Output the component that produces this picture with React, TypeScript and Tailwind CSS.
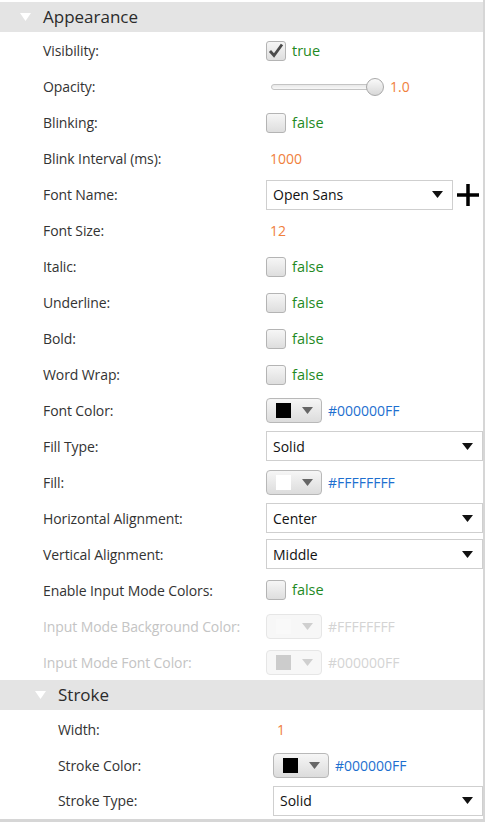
import React from 'react';

const font = { fontFamily: '"Open Sans", "Noto Sans", sans-serif' };

function Header({ title, indent }: { title: string; indent: 'top' | 'nested' }) {
  return (
    <div
      className={`flex h-[30px] items-center bg-[#e4e4e4] ${indent === 'top' ? 'pl-[20px]' : 'pl-[35px]'}`}
    >
      <svg width="11" height="8" viewBox="0 0 11 8" className="mr-[12px]">
        <polygon points="0,0 11,0 5.5,8" fill="#ffffff" />
      </svg>
      <span className="text-[17px] text-[#2b2b2b]">{title}</span>
    </div>
  );
}

function Row({
  label,
  children,
  nested,
  disabled,
}: {
  label: string;
  children: React.ReactNode;
  nested?: boolean;
  disabled?: boolean;
}) {
  return (
    <div className="flex h-[36px] items-center">
      <div
        className={`shrink-0 text-[14px] tracking-[-0.1px] ${nested ? 'w-[273px] pl-[58px]' : 'w-[266px] pl-[43px]'} ${
          disabled ? 'text-[#c4c4c4]' : 'text-[#333333]'
        }`}
      >
        {label}
      </div>
      <div className="flex min-w-0 flex-1 items-center">{children}</div>
    </div>
  );
}

function Check({ checked }: { checked: boolean }) {
  return (
    <div className="flex items-center">
      <div className="flex h-[20px] w-[20px] items-center justify-center rounded-[3px] border border-[#b4b4b4] bg-gradient-to-b from-[#f6f6f6] to-[#dedede]">
        {checked && (
          <svg width="16" height="15" viewBox="0 0 16 15">
            <path d="M2 8 L6 12.5 L14 1.5" stroke="#4a4a4a" strokeWidth="2.8" fill="none" strokeLinejoin="miter" />
          </svg>
        )}
      </div>
      <span className="ml-[6px] text-[14.5px] text-[#1f8a1f]">{checked ? 'true' : 'false'}</span>
    </div>
  );
}

function NumberValue({ v }: { v: string }) {
  return <span className="ml-[4px] text-[14px] text-[#f0803c]">{v}</span>;
}

function Arrow({ color = '#111111' }: { color?: string }) {
  return (
    <svg width="11" height="7" viewBox="0 0 11 7">
      <polygon points="0,0 11,0 5.5,7" fill={color} />
    </svg>
  );
}

function Combo({ value, className = '' }: { value: string; className?: string }) {
  return (
    <div
      className={`flex h-[30px] items-center justify-between border border-[#cfcfcf] bg-white pl-[6px] pr-[9px] ${className}`}
    >
      <span className="text-[14px] text-[#111111]">{value}</span>
      <Arrow />
    </div>
  );
}

function ColorPick({ swatch, hex, disabled }: { swatch: string; hex: string; disabled?: boolean }) {
  return (
    <div className="flex items-center">
      <div
        className={`flex h-[25px] w-[56px] items-center rounded-[4px] border pl-[9px] ${
          disabled
            ? 'border-[#e6e6e6] bg-[#f7f7f7]'
            : 'border-[#b8b8b8] bg-gradient-to-b from-[#f6f6f6] to-[#dcdcdc]'
        }`}
      >
        <div className="h-[15px] w-[15px]" style={{ background: swatch }} />
        <div className="ml-[11px]">
          <Arrow color={disabled ? '#cfcfcf' : '#666666'} />
        </div>
      </div>
      <span className={`ml-[6px] text-[14px] ${disabled ? 'text-[#d4d4d4]' : 'text-[#1e6fcf]'}`}>{hex}</span>
    </div>
  );
}

function Slider() {
  return (
    <div className="flex items-center">
      <div className="relative ml-[5px] h-[20px] w-[113px]">
        <div className="absolute left-0 right-[4px] top-[7px] h-[6px] rounded-full border border-[#c4c4c4] bg-gradient-to-b from-[#e8e8e8] to-[#f8f8f8]" />
        <div className="absolute right-0 top-[1px] h-[18px] w-[18px] rounded-full border border-[#a8a8a8] bg-gradient-to-b from-[#fafafa] to-[#d8d8d8]" />
      </div>
      <span className="ml-[6px] text-[14px] text-[#f0803c]">1.0</span>
    </div>
  );
}

export default function App() {
  return (
    <div
      className="flex h-[822px] w-[485px] flex-col border-b-[3px] border-r-2 border-[#d6d6d6] bg-white pt-[2px]"
      style={font}
    >
      <Header title="Appearance" indent="top" />
      <div className="h-[1px]" />
      <Row label="Visibility:">
        <Check checked />
      </Row>
      <Row label="Opacity:">
        <Slider />
      </Row>
      <Row label="Blinking:">
        <Check checked={false} />
      </Row>
      <Row label="Blink Interval (ms):">
        <NumberValue v="1000" />
      </Row>
      <Row label="Font Name:">
        <Combo value="Open Sans" className="w-[187px]" />
        <svg width="22" height="22" viewBox="0 0 22 22" className="ml-[4px]">
          <rect x="9.25" y="0" width="3.5" height="22" fill="#000" />
          <rect x="0" y="9.25" width="22" height="3.5" fill="#000" />
        </svg>
      </Row>
      <Row label="Font Size:">
        <NumberValue v="12" />
      </Row>
      <Row label="Italic:">
        <Check checked={false} />
      </Row>
      <Row label="Underline:">
        <Check checked={false} />
      </Row>
      <Row label="Bold:">
        <Check checked={false} />
      </Row>
      <Row label="Word Wrap:">
        <Check checked={false} />
      </Row>
      <Row label="Font Color:">
        <ColorPick swatch="#000000" hex="#000000FF" />
      </Row>
      <Row label="Fill Type:">
        <Combo value="Solid" className="flex-1" />
      </Row>
      <Row label="Fill:">
        <ColorPick swatch="#ffffff" hex="#FFFFFFFF" />
      </Row>
      <Row label="Horizontal Alignment:">
        <Combo value="Center" className="flex-1" />
      </Row>
      <Row label="Vertical Alignment:">
        <Combo value="Middle" className="flex-1" />
      </Row>
      <Row label="Enable Input Mode Colors:">
        <Check checked={false} />
      </Row>
      <Row label="Input Mode Background Color:" disabled>
        <ColorPick swatch="#f9f9f9" hex="#FFFFFFFF" disabled />
      </Row>
      <Row label="Input Mode Font Color:" disabled>
        <ColorPick swatch="#cccccc" hex="#000000FF" disabled />
      </Row>
      <Header title="Stroke" indent="nested" />
      <div className="h-[1px]" />
      <Row label="Width:" nested>
        <NumberValue v="1" />
      </Row>
      <Row label="Stroke Color:" nested>
        <ColorPick swatch="#000000" hex="#000000FF" />
      </Row>
      <Row label="Stroke Type:" nested>
        <Combo value="Solid" className="flex-1" />
      </Row>
    </div>
  );
}
